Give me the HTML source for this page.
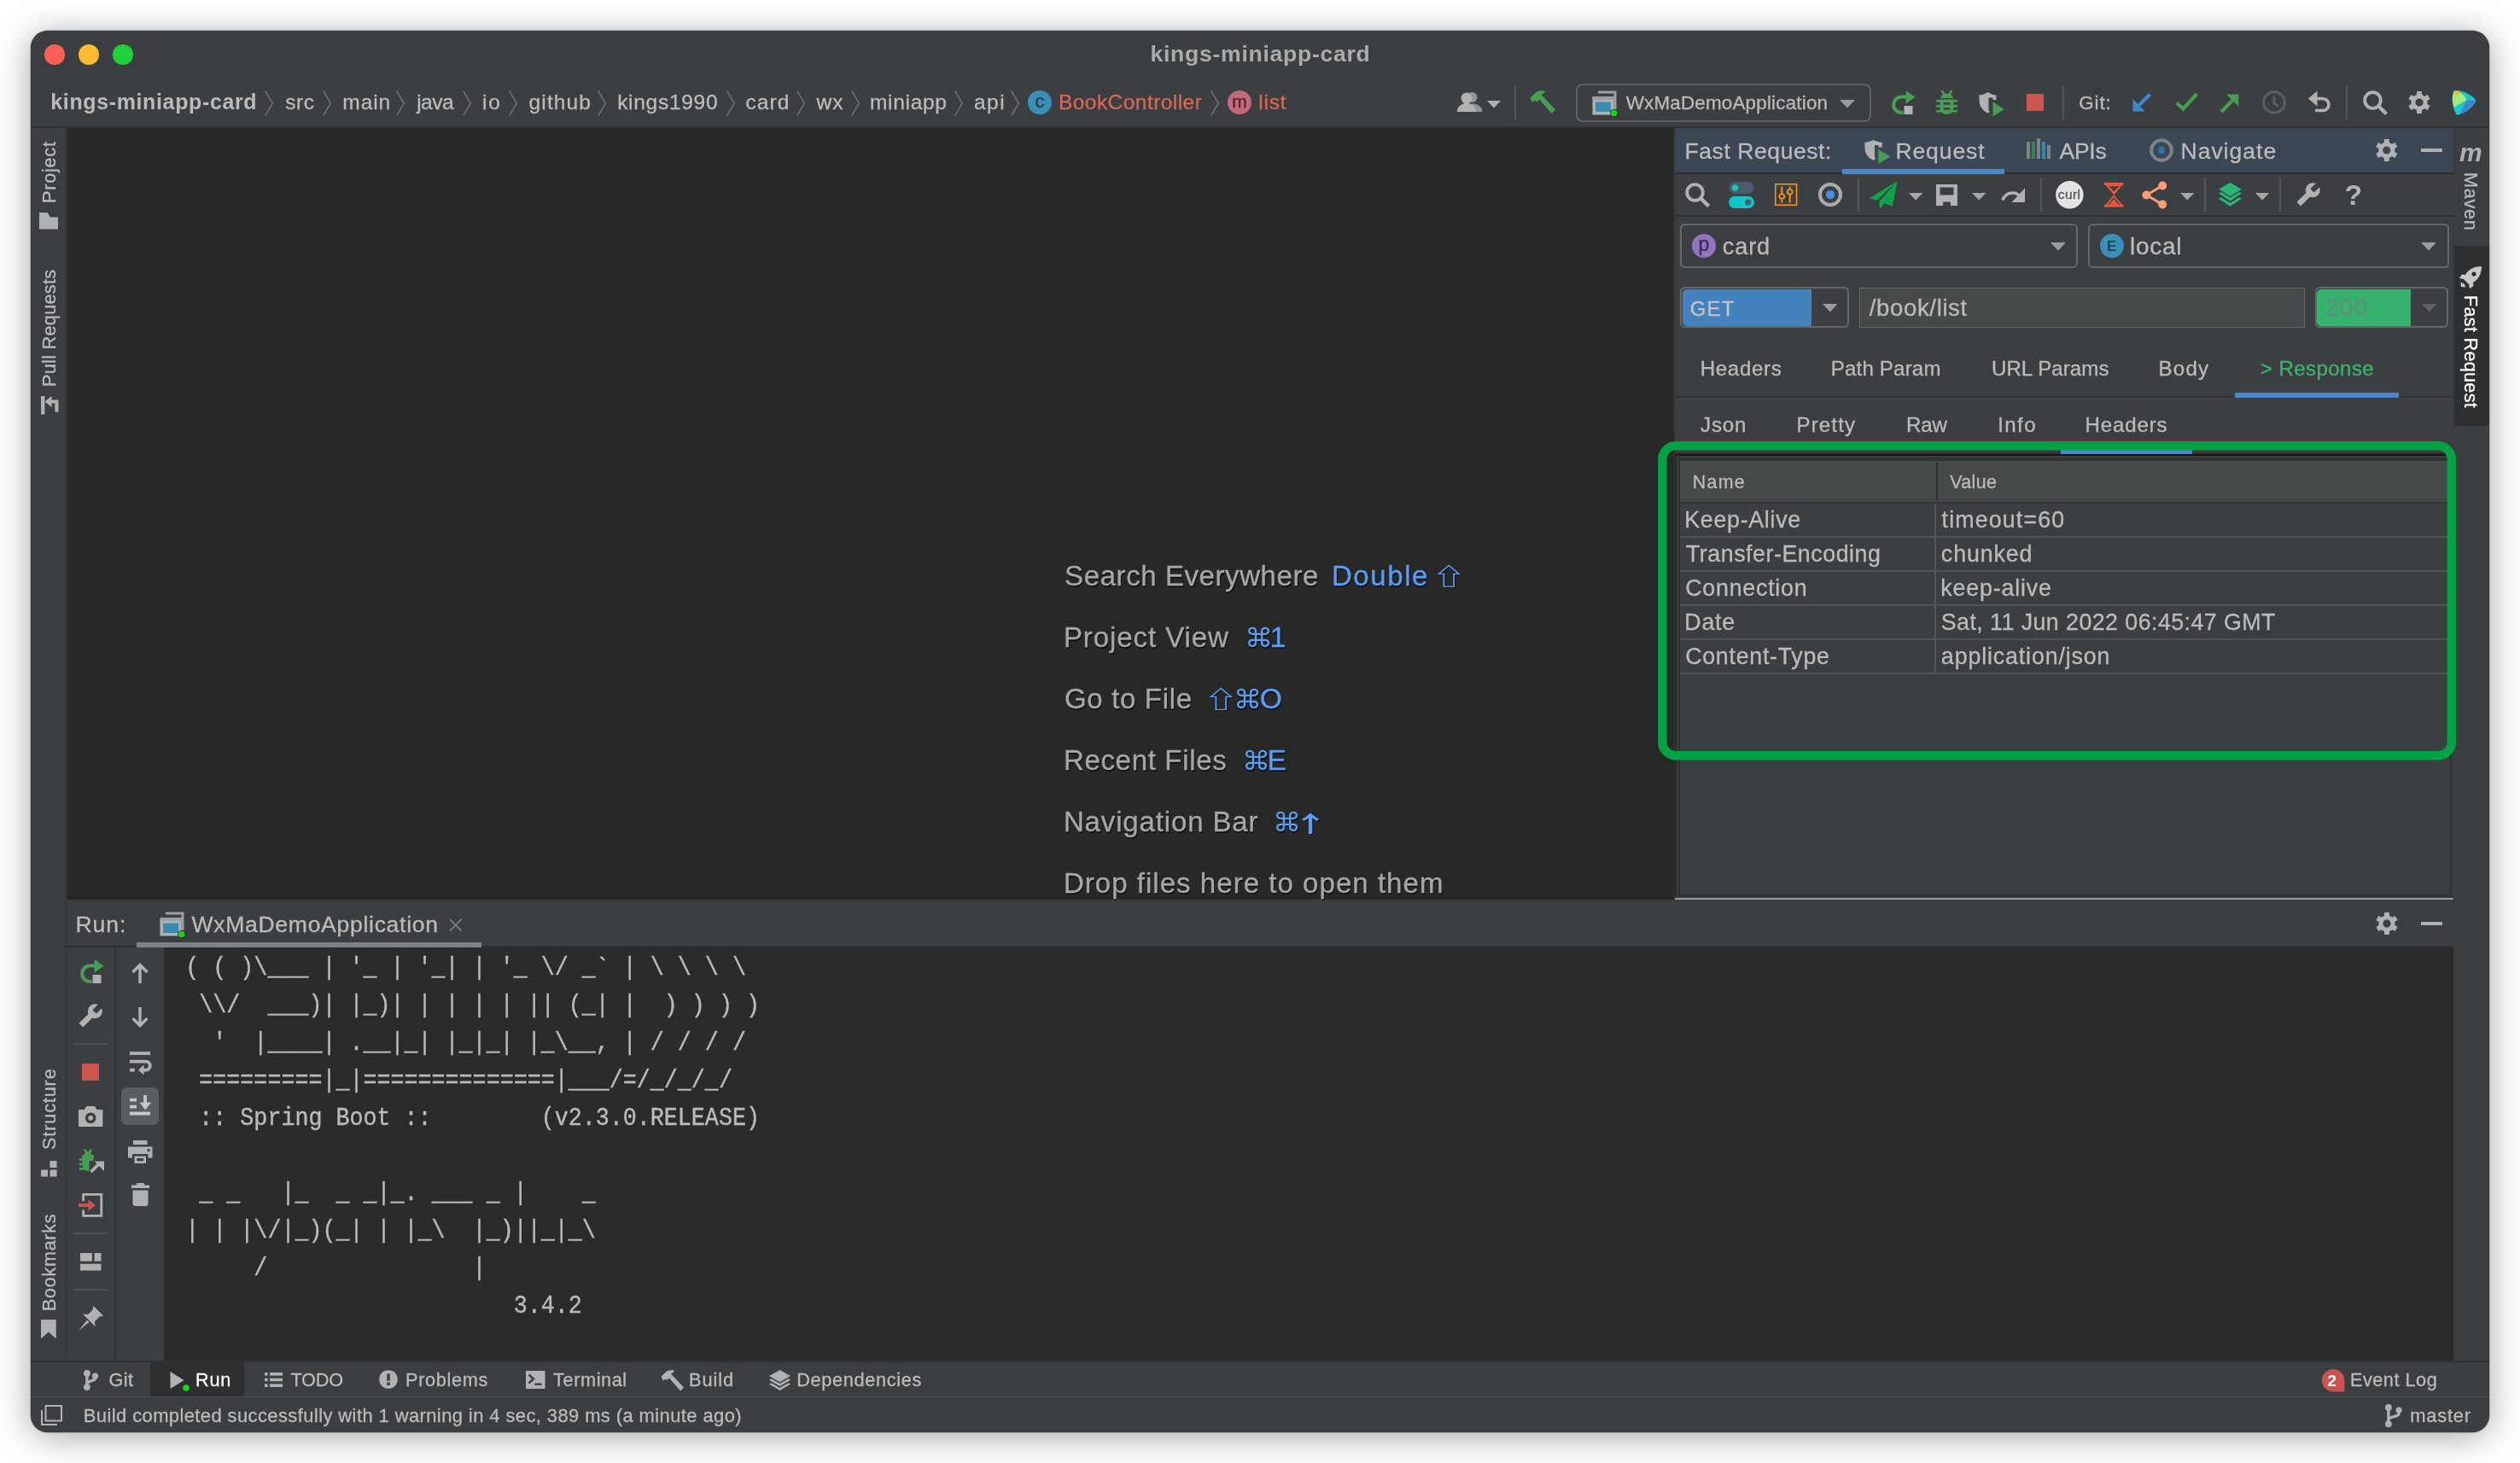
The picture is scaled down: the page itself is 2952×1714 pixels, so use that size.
<!DOCTYPE html>
<html><head><meta charset="utf-8"><title>kings-miniapp-card</title>
<style>
html,body{margin:0;padding:0;background:#fff;}
body{width:2952px;height:1714px;overflow:hidden;position:relative;font-family:'Liberation Sans','DejaVu Sans',sans-serif;}
#win{position:absolute;left:36px;top:36px;width:2880px;height:1642px;border-radius:20px;background:#3c3f41;overflow:hidden;}
#shadow{position:absolute;left:36px;top:36px;width:2880px;height:1642px;border-radius:20px;box-shadow:0 0 0 1px rgba(0,0,0,.22),0 5px 42px rgba(0,0,0,.36);}
#in{position:absolute;left:-36px;top:-36px;width:2952px;height:1714px;will-change:transform;}
svg{overflow:visible}
</style></head><body>
<div id="shadow"></div>
<div id="win"><div id="in">
<div style="position:absolute;left:36px;top:36px;width:2880px;height:1642px;background:#3c3f41;"></div>
<div style="position:absolute;left:36px;top:148px;width:2880px;height:2px;background:#323232;"></div>
<div style="position:absolute;left:78px;top:150px;width:1883px;height:904px;background:#282828;"></div>
<div style="position:absolute;left:76px;top:150px;width:2px;height:1445px;background:#35383a;"></div>
<div style="position:absolute;left:1961px;top:150px;width:914px;height:904px;background:#3c3f41;"></div>
<div style="position:absolute;left:1960px;top:150px;width:2px;height:904px;background:#313131;"></div>
<div style="position:absolute;left:2874px;top:150px;width:42px;height:1445px;background:#3c3f41;"></div>
<div style="position:absolute;left:2874px;top:150px;width:1px;height:1445px;background:#35383a;"></div>
<div style="position:absolute;left:2875px;top:288px;width:41px;height:211px;background:#2d2f30;"></div>
<div style="position:absolute;left:1962px;top:150px;width:912px;height:52px;background:#3b4754;"></div>
<div style="position:absolute;left:2158px;top:198px;width:190px;height:5.8px;background:#4a88c7;"></div>
<div style="position:absolute;left:1962px;top:252px;width:912px;height:2px;background:#323232;"></div>
<div style="position:absolute;left:1962px;top:1051.8px;width:912px;height:2.2px;background:#9c9d9e;"></div>
<div style="position:absolute;left:78px;top:1054px;width:2796px;height:55px;background:#3c3f41;"></div>
<div style="position:absolute;left:78px;top:1110px;width:2796px;height:485px;background:#2b2b2b;"></div>
<div style="position:absolute;left:78px;top:1110px;width:57px;height:485px;background:#3c3f41;"></div>
<div style="position:absolute;left:134px;top:1110px;width:2px;height:485px;background:#323232;"></div>
<div style="position:absolute;left:136px;top:1110px;width:56px;height:485px;background:#3c3f41;"></div>
<div style="position:absolute;left:78px;top:1108px;width:2796px;height:2px;background:#303030;"></div>
<div style="position:absolute;left:160px;top:1104px;width:404px;height:6px;background:#7d8287;"></div>
<div style="position:absolute;left:36px;top:1594px;width:2880px;height:2px;background:#323232;"></div>
<div style="position:absolute;left:36px;top:1596px;width:2880px;height:40px;background:#3c3f41;"></div>
<div style="position:absolute;left:176px;top:1596px;width:110px;height:40px;background:#2d2f30;"></div>
<div style="position:absolute;left:36px;top:1636px;width:2880px;height:1px;background:#4b4e50;"></div>
<div style="position:absolute;left:36px;top:1637px;width:2880px;height:41px;background:#3c3f41;"></div>
<svg style="position:absolute;left:310px;top:106px;" width="10" height="30" viewBox="0 0 10 30"><path d="M0.7 0.5 L9.3 15 L0.7 29.5" fill="none" stroke="#6b6e70" stroke-width="1.6"/></svg>
<svg style="position:absolute;left:378px;top:106px;" width="10" height="30" viewBox="0 0 10 30"><path d="M0.7 0.5 L9.3 15 L0.7 29.5" fill="none" stroke="#6b6e70" stroke-width="1.6"/></svg>
<svg style="position:absolute;left:464px;top:106px;" width="10" height="30" viewBox="0 0 10 30"><path d="M0.7 0.5 L9.3 15 L0.7 29.5" fill="none" stroke="#6b6e70" stroke-width="1.6"/></svg>
<svg style="position:absolute;left:542px;top:106px;" width="10" height="30" viewBox="0 0 10 30"><path d="M0.7 0.5 L9.3 15 L0.7 29.5" fill="none" stroke="#6b6e70" stroke-width="1.6"/></svg>
<svg style="position:absolute;left:596px;top:106px;" width="10" height="30" viewBox="0 0 10 30"><path d="M0.7 0.5 L9.3 15 L0.7 29.5" fill="none" stroke="#6b6e70" stroke-width="1.6"/></svg>
<svg style="position:absolute;left:700px;top:106px;" width="10" height="30" viewBox="0 0 10 30"><path d="M0.7 0.5 L9.3 15 L0.7 29.5" fill="none" stroke="#6b6e70" stroke-width="1.6"/></svg>
<svg style="position:absolute;left:851px;top:106px;" width="10" height="30" viewBox="0 0 10 30"><path d="M0.7 0.5 L9.3 15 L0.7 29.5" fill="none" stroke="#6b6e70" stroke-width="1.6"/></svg>
<svg style="position:absolute;left:932.7px;top:106px;" width="10" height="30" viewBox="0 0 10 30"><path d="M0.7 0.5 L9.3 15 L0.7 29.5" fill="none" stroke="#6b6e70" stroke-width="1.6"/></svg>
<svg style="position:absolute;left:996.8px;top:106px;" width="10" height="30" viewBox="0 0 10 30"><path d="M0.7 0.5 L9.3 15 L0.7 29.5" fill="none" stroke="#6b6e70" stroke-width="1.6"/></svg>
<svg style="position:absolute;left:1118px;top:106px;" width="10" height="30" viewBox="0 0 10 30"><path d="M0.7 0.5 L9.3 15 L0.7 29.5" fill="none" stroke="#6b6e70" stroke-width="1.6"/></svg>
<svg style="position:absolute;left:1184px;top:106px;" width="10" height="30" viewBox="0 0 10 30"><path d="M0.7 0.5 L9.3 15 L0.7 29.5" fill="none" stroke="#6b6e70" stroke-width="1.6"/></svg>
<svg style="position:absolute;left:1418px;top:106px;" width="10" height="30" viewBox="0 0 10 30"><path d="M0.7 0.5 L9.3 15 L0.7 29.5" fill="none" stroke="#6b6e70" stroke-width="1.6"/></svg>
<div style="position:absolute;left:1968.0px;top:262.0px;width:462px;height:47.5px;border:2px solid #656868;border-radius:5.5px;background:#3c3f41;box-sizing:content-box"></div>
<div style="position:absolute;left:2445.5px;top:262.0px;width:419.5px;height:47.5px;border:2px solid #656868;border-radius:5.5px;background:#3c3f41;box-sizing:content-box"></div>
<svg style="position:absolute;left:2401.7px;top:284.4px;" width="18" height="9.5" viewBox="0 0 18 9.5"><path d="M0 0 H18 L9.0 9.5 Z" fill="#9a9da0"/></svg>
<svg style="position:absolute;left:2835.8px;top:284.4px;" width="18" height="9.5" viewBox="0 0 18 9.5"><path d="M0 0 H18 L9.0 9.5 Z" fill="#9a9da0"/></svg>
<div style="position:absolute;left:1968.2px;top:336.2px;width:193.7px;height:43.8px;border:2px solid #656868;border-radius:5.5px;background:#3c3f41;box-sizing:content-box"></div>
<div style="position:absolute;left:1970.5px;top:338.5px;width:151.2px;height:43.4px;background:#4382bd;border-radius:5px 0 0 5px"></div>
<svg style="position:absolute;left:2134.7px;top:355.5px;" width="17.5" height="9.5" viewBox="0 0 17.5 9.5"><path d="M0 0 H17.5 L8.75 9.5 Z" fill="#9a9da0"/></svg>
<div style="position:absolute;left:2178.3px;top:337px;width:520px;height:45px;border:1.5px solid #646668;background:#45494a"></div>
<div style="position:absolute;left:2711.9px;top:336.2px;width:152.6px;height:43.8px;border:2px solid #656868;border-radius:5.5px;background:#3c3f41;box-sizing:content-box"></div>
<div style="position:absolute;left:2714.2px;top:338.5px;width:110px;height:43.4px;background:#35b36e;border-radius:5px 0 0 5px"></div>
<svg style="position:absolute;left:2836.5px;top:355.5px;" width="17.5" height="9.5" viewBox="0 0 17.5 9.5"><path d="M0 0 H17.5 L8.75 9.5 Z" fill="#5f6365"/></svg>
<div style="position:absolute;left:1962px;top:463.5px;width:912px;height:2px;background:#323232;"></div>
<div style="position:absolute;left:2618px;top:460px;width:192px;height:6px;background:#4a88c7;"></div>
<div style="position:absolute;left:1962px;top:528px;width:912px;height:2px;background:#3b3a3d;"></div>
<div style="position:absolute;left:1962px;top:530px;width:912px;height:2px;background:#323232;"></div>
<div style="position:absolute;left:2413.7px;top:527px;width:154.3px;height:5px;background:#4a88c7;"></div>
<div style="position:absolute;left:1962px;top:532px;width:912px;height:2px;background:#151515;"></div>
<div style="position:absolute;left:1962px;top:533px;width:2px;height:517px;background:#282828;"></div>
<div style="position:absolute;left:1966px;top:536px;width:906px;height:4px;background:#323232;"></div>
<div style="position:absolute;left:1966px;top:533px;width:2px;height:517px;background:#303030;"></div>
<div style="position:absolute;left:2870px;top:533px;width:2px;height:517px;background:#303030;"></div>
<div style="position:absolute;left:1966px;top:1048px;width:906px;height:2.5px;background:#303030;"></div>
<div style="position:absolute;left:1968px;top:540px;width:2900px;height:0px;background:#000;"></div>
<div style="position:absolute;left:1968px;top:540px;width:900px;height:48px;background:#45494a;"></div>
<div style="position:absolute;left:1968px;top:588px;width:900px;height:2px;background:#2f383b;"></div>
<div style="position:absolute;left:2268px;top:542px;width:2px;height:44px;background:#2b3538;"></div>
<div style="position:absolute;left:1968px;top:628px;width:900px;height:2px;background:#525557;"></div>
<div style="position:absolute;left:1968px;top:668px;width:900px;height:2px;background:#525557;"></div>
<div style="position:absolute;left:1968px;top:708px;width:900px;height:2px;background:#525557;"></div>
<div style="position:absolute;left:1968px;top:748px;width:900px;height:2px;background:#525557;"></div>
<div style="position:absolute;left:1968px;top:788px;width:900px;height:2px;background:#525557;"></div>
<div style="position:absolute;left:2266px;top:590px;width:2px;height:200px;background:#525557;"></div>
<svg style="position:absolute;left:52px;top:52px;" width="24" height="24" viewBox="0 0 24 24"><circle cx="12" cy="12" r="12" fill="#fe5f57"/></svg>
<svg style="position:absolute;left:92px;top:52px;" width="24" height="24" viewBox="0 0 24 24"><circle cx="12" cy="12" r="12" fill="#febc2e"/></svg>
<svg style="position:absolute;left:132px;top:52px;" width="24" height="24" viewBox="0 0 24 24"><circle cx="12" cy="12" r="12" fill="#1fd038"/></svg>
<svg style="position:absolute;left:1204px;top:106px;" width="28" height="28" viewBox="0 0 28 28"><circle cx="14" cy="14" r="14" fill="#3a8fb7"/></svg>
<svg style="position:absolute;left:1438px;top:106px;" width="28" height="28" viewBox="0 0 28 28"><circle cx="14" cy="14" r="14" fill="#c1687b"/></svg>
<svg style="position:absolute;left:1707px;top:107px;" width="30" height="24" viewBox="0 0 30 24"><g fill="#afb1b3"><circle cx="17.5" cy="7" r="6" opacity=".75"/><path d="M9 24 C9 17 13 14.5 17.500 14.5 C23 14.5 29.500 17 29.500 24 Z" opacity=".75"/><circle cx="11" cy="8" r="6.500"/><path d="M0 24 C0 17 5 15.500 7.500 14.500 L8.500 12 H13.500 L14.500 14.500 C17 15.500 22 17 22 24 Z"/></g></svg>
<svg style="position:absolute;left:1742px;top:118px;" width="16" height="8.5" viewBox="0 0 16 8.5"><path d="M0 0 H16 L8.0 8.5 Z" fill="#afb1b3"/></svg>
<div style="position:absolute;left:1773.8px;top:100px;width:2px;height:40px;background:#555759;"></div>
<svg style="position:absolute;left:1792px;top:106px;" width="30" height="28" viewBox="0 0 30 28"><g fill="#499c54"><path d="M0.500 8.500 L9 0.800 L16.500 0 L18 1.800 L13.500 5.500 L15 7.500 L8 13.500 L6.500 11.800 L3 14 Z"/><path d="M10.500 9.500 L14.500 6 L30 22.500 L25.500 27 Z"/></g></svg>
<div style="position:absolute;left:1845.5px;top:98px;width:342px;height:40.5px;border:2px solid #5f6265;border-radius:8px"></div>
<svg style="position:absolute;left:1865px;top:105.5px;" width="30" height="30" viewBox="0 0 30 30"><g><path d="M7 0.500 H28.500 V22 H25.500 V3.500 H7 Z" fill="#9da0a3"/><rect x="0.500" y="7" width="25" height="21.500" fill="#afb1b3"/><rect x="0.500" y="7" width="25" height="4" fill="#9da0a3"/><rect x="4" y="13.500" width="18" height="11.500" fill="#3a8cb1"/><circle cx="25.800" cy="26.500" r="4.600" fill="#2b2b2b"/><circle cx="25.800" cy="26.500" r="3.800" fill="#12d812"/></g></svg>
<svg style="position:absolute;left:2155px;top:117px;" width="18" height="9.5" viewBox="0 0 18 9.5"><path d="M0 0 H18 L9.0 9.5 Z" fill="#9a9da0"/></svg>
<svg style="position:absolute;left:2215.5px;top:106px;" width="28" height="29" viewBox="0 0 28 29"><g><path d="M17 7.600 H11.350 A9.150 9.150 0 1 0 11.350 25.900 H13.500" fill="none" stroke="#499c54" stroke-width="4"/><path d="M16.600 0.100 L27.500 7.750 L16.600 15.400 Z" fill="#499c54"/><rect x="14.500" y="18" width="10" height="10" fill="#afb1b3"/></g></svg>
<svg style="position:absolute;left:2267.7px;top:106px;" width="25" height="28" viewBox="0 0 25 28"><g fill="#499c54"><path d="M5.500 0.500 L7.800 -0.500 L10.500 3.800 H14.500 L17.200 -0.500 L19.500 0.500 L17 5 C19 6 20 7.500 20 9 H5 C5 7.500 6 6 8 5 Z"/><path d="M4.500 10.500 H20.500 V20 C20.500 25 17 28 12.500 28 C8 28 4.500 25 4.500 20 Z"/><rect x="0" y="11" width="25" height="2.600"/><rect x="0" y="17" width="25" height="2.600"/><rect x="0" y="23" width="25" height="2.600"/></g><rect x="8.500" y="14.200" width="8" height="2.400" fill="#3c3f41"/><rect x="8.500" y="20.200" width="8" height="2.400" fill="#3c3f41"/></svg>
<svg style="position:absolute;left:2317.7px;top:107.5px;" width="30" height="29" viewBox="0 0 30 29"><g><path d="M0.500 3.500 C5 3 8 1.500 10.500 0 C13 1.500 16 3 20.500 3.500 V9 H16.500 V6.500 H11.500 V21.500 L13 22.500 C12 23.500 11.500 24 10.500 24.500 C4 21.500 0.500 16 0.500 9 Z" fill="#afb1b3"/><path d="M16.500 11.500 L30 20 L16.500 28.500 Z" fill="#499c54"/></g></svg>
<div style="position:absolute;left:2374px;top:110px;width:20px;height:20px;background:#c9554d;"></div>
<div style="position:absolute;left:2415.9px;top:100px;width:2px;height:40px;background:#555759;"></div>
<svg style="position:absolute;left:2497.5px;top:107.5px;" width="23" height="23" viewBox="0 0 23 23"><g><path d="M20.500 2.500 L6 17" stroke="#3f88d1" stroke-width="4" fill="none"/><path d="M0.500 8 L0.500 22.500 L15 22.500 Z" fill="#3f88d1"/></g></svg>
<svg style="position:absolute;left:2548px;top:108px;" width="27" height="22" viewBox="0 0 27 22"><path d="M1.800 12.500 L9.500 19.500 L25.500 2" fill="none" stroke="#499c54" stroke-width="4.200"/></svg>
<svg style="position:absolute;left:2600px;top:109.5px;" width="23" height="23" viewBox="0 0 23 23"><g><path d="M2 21 L17 6" stroke="#499c54" stroke-width="4" fill="none"/><path d="M8 0.500 H22.500 V15 Z" fill="#499c54"/></g></svg>
<svg style="position:absolute;left:2650px;top:105.8px;" width="28" height="28" viewBox="0 0 28 28"><g fill="none" stroke="#5b5e60" stroke-width="3.200"><circle cx="14" cy="14" r="12.300"/><path d="M13.800 7 V15 L19 18.500" stroke-width="2.800"/></g></svg>
<svg style="position:absolute;left:2704px;top:106px;" width="27" height="27" viewBox="0 0 27 27"><g><path d="M8 9.500 H17 A7 7 0 0 1 17 23.500 H8" fill="none" stroke="#afb1b3" stroke-width="3.600"/><path d="M0 9.500 L10.500 0.500 V18.500 Z" fill="#afb1b3"/></g></svg>
<div style="position:absolute;left:2748px;top:100px;width:2px;height:40px;background:#555759;"></div>
<svg style="position:absolute;left:2767.5px;top:105.8px;" width="29" height="29" viewBox="0 0 29 29"><g fill="none" stroke="#afb1b3"><circle cx="11.500" cy="11.500" r="9.300" stroke-width="3.800"/><path d="M18.200 18.200 L27.500 27.500" stroke-width="4.400"/></g></svg>
<svg style="position:absolute;left:0px;top:0px;" width="1" height="1" viewBox="0 0 1 1"><path d="M2830.94 110.90 L2831.12 107.12 L2836.88 107.12 L2837.06 110.90 L2840.35 112.80 L2843.72 111.07 L2846.60 116.05 L2843.41 118.10 L2843.41 121.90 L2846.60 123.95 L2843.72 128.93 L2840.35 127.20 L2837.06 129.10 L2836.88 132.88 L2831.12 132.88 L2830.94 129.10 L2827.65 127.20 L2824.28 128.93 L2821.40 123.95 L2824.59 121.90 L2824.59 118.10 L2821.40 116.05 L2824.28 111.07 L2827.65 112.80 Z M2829.40 120.00 a4.6 4.6 0 1 0 9.2 0 a4.6 4.6 0 1 0 -9.2 0 Z" fill="#afb1b3" fill-rule="evenodd"/></svg>
<svg style="position:absolute;left:2871.5px;top:105.8px;" width="29" height="28.5" viewBox="0 0 29 28.5"><g><path d="M3 0 C12 -1 24 5 28.700 12 C25 21 14 28 6 28.400 C1 21 -1 9 3 0 Z" fill="#3f86c9"/><path d="M3 0 C12 -1 24 5 28.700 12 L17.500 11.500 L9.600 28 C8 28.300 7 28.400 6 28.400 C1 21 -1 9 3 0 Z" fill="#1cc5cf"/><path d="M7 0.200 C10 0.300 13 1.200 15.500 3 L10 4 Z" fill="#2cb978"/><path d="M3 0.300 C8 0.300 13.500 3 17.500 11 L3.300 19.800 C0 14 0 6 3 0.300 Z" fill="#a5e87f"/><path d="M3.200 0.400 C6 0.200 8.500 1.300 10 3.500 L4.200 5.500 C3.500 4 3 2 3.200 0.400 Z" fill="#fbb02d"/></g></svg>
<svg style="position:absolute;left:2183.5px;top:163.5px;" width="31" height="29" viewBox="0 0 31 29"><g><path d="M0.500 3 C4.500 2.600 7.500 1.300 10.500 0 C13.500 1.300 16.500 2.600 20.800 3 V8.500 H16.500 V6 H12 V20.500 L13.500 21.500 C12.500 22.500 11.500 23.300 10.500 23.800 C4 20.800 0.500 15.500 0.500 8.500 Z" fill="#afb1b3"/><path d="M16.300 11 L30.500 19.500 L16.300 28 Z" fill="#499c54"/></g></svg>
<div style="position:absolute;left:2374.4px;top:166px;width:4px;height:19.80000000000001px;background:#7f8386;"></div>
<div style="position:absolute;left:2380px;top:166px;width:4px;height:19.80000000000001px;background:#3e7f57;"></div>
<div style="position:absolute;left:2386.1px;top:162px;width:4px;height:23.80000000000001px;background:#7f8386;"></div>
<div style="position:absolute;left:2392.2px;top:166px;width:4px;height:19.80000000000001px;background:#3786ad;"></div>
<div style="position:absolute;left:2397.8px;top:169.8px;width:4px;height:16.0px;background:#7f8386;"></div>
<svg style="position:absolute;left:2518px;top:162px;" width="28" height="28" viewBox="0 0 28 28"><circle cx="14" cy="14" r="11.800" fill="none" stroke="#7c8288" stroke-width="4"/><circle cx="14" cy="14" r="4.300" fill="#2a76aa"/></svg>
<svg style="position:absolute;left:0px;top:0px;" width="1" height="1" viewBox="0 0 1 1"><path d="M2792.74 166.90 L2792.92 163.12 L2798.68 163.12 L2798.86 166.90 L2802.15 168.80 L2805.52 167.07 L2808.40 172.05 L2805.21 174.10 L2805.21 177.90 L2808.40 179.95 L2805.52 184.93 L2802.15 183.20 L2798.86 185.10 L2798.68 188.88 L2792.92 188.88 L2792.74 185.10 L2789.45 183.20 L2786.08 184.93 L2783.20 179.95 L2786.39 177.90 L2786.39 174.10 L2783.20 172.05 L2786.08 167.07 L2789.45 168.80 Z M2791.20 176.00 a4.6 4.6 0 1 0 9.2 0 a4.6 4.6 0 1 0 -9.2 0 Z" fill="#afb1b3" fill-rule="evenodd"/></svg>
<div style="position:absolute;left:2836px;top:174px;width:24.5px;height:4px;background:#afb1b3;"></div>
<div style="position:absolute;left:1962px;top:201.5px;width:196px;height:2px;background:#2d3033;"></div>
<div style="position:absolute;left:2348px;top:201.5px;width:526px;height:2px;background:#2d3033;"></div>
<svg style="position:absolute;left:1973.8px;top:213.8px;" width="29" height="29" viewBox="0 0 29 29"><g fill="none" stroke="#afb1b3"><circle cx="11.500" cy="11.500" r="9.300" stroke-width="3.800"/><path d="M18.200 18.200 L27.500 27.500" stroke-width="4.400"/></g></svg>
<svg style="position:absolute;left:2025.2px;top:212.6px;" width="30" height="31" viewBox="0 0 30 31"><g><rect x="0.500" y="0" width="29" height="14" rx="7" fill="#4e5a6c"/><circle cx="7.500" cy="7" r="3.700" fill="#10c9c9"/><rect x="0" y="16.800" width="30" height="14.200" rx="7.100" fill="#0cc7c7"/><circle cx="22.800" cy="24" r="3.600" fill="#50586a"/></g></svg>
<svg style="position:absolute;left:2079px;top:214.9px;" width="26.5" height="26" viewBox="0 0 26.5 26"><g fill="none" stroke="#f3921c"><rect x="0.800" y="0.800" width="24.800" height="24.400" stroke-width="1.600"/><path d="M8.300 3.500 V11.500 M8.300 18.500 V22.500 M17.700 3.500 V6.500 M17.700 13 V22.500" stroke-width="2"/><circle cx="8.300" cy="15" r="2.900" stroke-width="1.800"/><circle cx="17.700" cy="9.700" r="2.900" stroke-width="1.800"/></g></svg>
<svg style="position:absolute;left:2130px;top:213.8px;" width="28" height="28" viewBox="0 0 28 28"><circle cx="14" cy="14" r="12" fill="none" stroke="#a9abad" stroke-width="4"/><circle cx="14" cy="14" r="5.200" fill="#4a8fd8"/></svg>
<div style="position:absolute;left:2175.8px;top:208px;width:2px;height:39.5px;background:#555759;"></div>
<svg style="position:absolute;left:2189.9px;top:211.7px;" width="33" height="33" viewBox="0 0 33 33"><g fill="#10a248"><path d="M32.500 0 L0 20 L8.500 23 Z"/><path d="M32.500 0 L11 24.500 L12.500 33 L17 26 Z" /><path d="M32.500 0 L13.500 25 L27 29.500 Z"/></g></svg>
<svg style="position:absolute;left:2235.8px;top:225.7px;" width="16.5" height="8.5" viewBox="0 0 16.5 8.5"><path d="M0 0 H16.5 L8.25 8.5 Z" fill="#a5a7a9"/></svg>
<svg style="position:absolute;left:2267.6px;top:215.6px;" width="25" height="25" viewBox="0 0 25 25"><path d="M0 0 H25 V25 H0 Z M4.500 3.500 V12.500 H20.500 V3.500 Z M8.200 20.500 V25 H16.900 V20.500 Z" fill="#afb1b3" fill-rule="evenodd"/></svg>
<svg style="position:absolute;left:2309.8px;top:225.7px;" width="16.5" height="8.5" viewBox="0 0 16.5 8.5"><path d="M0 0 H16.5 L8.25 8.5 Z" fill="#a5a7a9"/></svg>
<svg style="position:absolute;left:2344.4px;top:219.5px;" width="28" height="18" viewBox="0 0 28 18"><g><path d="M1.800 14.500 C4.500 8.500 9 6 13.500 6 C17.500 6 20.500 7.800 22.500 10.500" fill="none" stroke="#afb1b3" stroke-width="3.400"/><path d="M28 0.500 V17 H12.500 Z" fill="#afb1b3"/></g></svg>
<div style="position:absolute;left:2390.2px;top:208px;width:2px;height:39.5px;background:#555759;"></div>
<svg style="position:absolute;left:2407.5px;top:211.7px;" width="33" height="33" viewBox="0 0 33 33"><circle cx="16.400" cy="16.200" r="16.200" fill="#e2e2e2"/></svg>
<svg style="position:absolute;left:2464.7px;top:213.8px;" width="23" height="29" viewBox="0 0 23 29"><g fill="#f4553f"><rect x="0" y="0" width="22.600" height="2.800"/><rect x="0" y="25.700" width="22.600" height="2.800"/><path d="M1 2 L11.300 14.200 L21.600 2 L19.500 2 L11.300 11.500 L3.100 2 Z"/><path d="M2 2.800 H20.600 L11.300 14 Z" opacity=".95"/><path d="M11.300 14.200 L1 26.500 H3.300 L11.300 17 L19.300 26.500 H21.600 Z"/><path d="M11.300 19.500 L17 25.700 H5.600 Z"/></g><path d="M5.500 4.200 H17.100 L11.300 10.500 Z" fill="#3c3f41"/></svg>
<svg style="position:absolute;left:2509px;top:211.7px;" width="30" height="33" viewBox="0 0 30 33"><g fill="#ff9c78" stroke="#ff9c78"><path d="M24 5.500 L5.500 16.500 L24 27.500" fill="none" stroke-width="2.800"/><circle cx="24.200" cy="5.500" r="5" stroke="none"/><circle cx="5.500" cy="16.500" r="5" stroke="none"/><circle cx="24.200" cy="27.500" r="5" stroke="none"/></g></svg>
<svg style="position:absolute;left:2553.8px;top:225.7px;" width="16.5" height="8.5" viewBox="0 0 16.5 8.5"><path d="M0 0 H16.5 L8.25 8.5 Z" fill="#a5a7a9"/></svg>
<div style="position:absolute;left:2581.8px;top:208px;width:2px;height:39.5px;background:#555759;"></div>
<svg style="position:absolute;left:2598.7px;top:213.8px;" width="27" height="28" viewBox="0 0 27 28"><g fill="#2cb673"><path d="M13.500 0 L27 7.800 L13.500 16 L0 7.800 Z"/><path d="M0 12.600 L2.800 11 L13.500 17.500 L24.200 11 L27 12.600 L13.500 21.500 Z"/><path d="M0 18.800 L2.800 17.200 L13.500 23.800 L24.200 17.200 L27 18.800 L13.500 27.800 Z"/></g></svg>
<svg style="position:absolute;left:2641.8px;top:225.7px;" width="16.5" height="8.5" viewBox="0 0 16.5 8.5"><path d="M0 0 H16.5 L8.25 8.5 Z" fill="#a5a7a9"/></svg>
<div style="position:absolute;left:2669.8px;top:208px;width:2px;height:39.5px;background:#555759;"></div>
<svg style="position:absolute;left:2690.3px;top:214.2px;" width="28.0" height="28.0" viewBox="0 0 28 28"><g><path d="M2.800 25.200 L17 11" stroke="#afb1b3" stroke-width="6.600" fill="none"/><circle cx="19.300" cy="8.700" r="8.500" fill="#afb1b3"/><rect x="18.300" y="5.600" width="12" height="6.200" fill="#3c3f41" transform="rotate(-45 19.300 8.700)"/></g></svg>
<svg style="position:absolute;left:1982px;top:274.4px;" width="28" height="28" viewBox="0 0 28 28"><circle cx="14" cy="14" r="14" fill="#9274c0"/></svg>
<svg style="position:absolute;left:2459.6px;top:274.4px;" width="28" height="28" viewBox="0 0 28 28"><circle cx="14" cy="14" r="14" fill="#3a8fb7"/></svg>
<svg style="position:absolute;left:46px;top:249px;" width="22" height="19.5" viewBox="0 0 22 19.5"><path d="M0 0 H9.500 L13 5.500 H22 V19.500 H0 Z" fill="#afb1b3"/></svg>
<svg style="position:absolute;left:47.5px;top:464px;" width="20.5" height="21.5" viewBox="0 0 20.5 21.5"><g fill="#afb1b3"><rect x="0" y="0" width="4.400" height="21.500"/><path d="M4.400 6.500 L12.500 0 V4.400 H20.500 V18.500 H16.300 V8.600 H12.500 V13 Z"/></g></svg>
<svg style="position:absolute;left:48px;top:1360px;" width="18.5" height="18.5" viewBox="0 0 18.5 18.5"><g fill="#afb1b3"><rect x="10.500" y="0" width="8" height="8"/><rect x="0" y="10.500" width="8" height="8"/><rect x="10.500" y="10.500" width="8" height="8"/></g></svg>
<svg style="position:absolute;left:48px;top:1545.7px;" width="17.7" height="22.5" viewBox="0 0 17.7 22.5"><path d="M0 0 H17.700 V22.500 L8.850 14.500 L0 22.500 Z" fill="#afb1b3"/></svg>
<svg style="position:absolute;left:2881px;top:311.5px;" width="26" height="26" viewBox="0 0 26 26"><g fill="#c8c9ca"><path d="M26 0 C18 0 11 3 7 10 L3 9.500 L0 14 L5 15 L11 21 L12 26 L16.500 23 L16 19 C23 15 26 8 26 0 Z"/><path d="M1.500 18.500 L5.500 20.500 L7.500 24.500 L2 24 Z"/></g><circle cx="17" cy="9" r="2.600" fill="#2d2f30"/></svg>
<svg style="position:absolute;left:186.5px;top:1067.5px;" width="30" height="30" viewBox="0 0 30 30"><g><path d="M7 0.500 H28.500 V22 H25.500 V3.500 H7 Z" fill="#9da0a3"/><rect x="0.500" y="7" width="25" height="21.500" fill="#afb1b3"/><rect x="0.500" y="7" width="25" height="4" fill="#9da0a3"/><rect x="4" y="13.500" width="18" height="11.500" fill="#3a8cb1"/><circle cx="25.800" cy="26.500" r="4.600" fill="#2b2b2b"/><circle cx="25.800" cy="26.500" r="3.800" fill="#12d812"/></g></svg>
<svg style="position:absolute;left:526.4px;top:1076.3px;" width="15.4" height="15.4" viewBox="0 0 15.4 15.4"><path d="M1 1 L14.400 14.400 M14.400 1 L1 14.400" stroke="#7a7d80" stroke-width="1.800" fill="none"/></svg>
<svg style="position:absolute;left:0px;top:0px;" width="1" height="1" viewBox="0 0 1 1"><path d="M2792.94 1072.90 L2793.12 1069.12 L2798.88 1069.12 L2799.06 1072.90 L2802.35 1074.80 L2805.72 1073.07 L2808.60 1078.05 L2805.41 1080.10 L2805.41 1083.90 L2808.60 1085.95 L2805.72 1090.93 L2802.35 1089.20 L2799.06 1091.10 L2798.88 1094.88 L2793.12 1094.88 L2792.94 1091.10 L2789.65 1089.20 L2786.28 1090.93 L2783.40 1085.95 L2786.59 1083.90 L2786.59 1080.10 L2783.40 1078.05 L2786.28 1073.07 L2789.65 1074.80 Z M2791.40 1082.00 a4.6 4.6 0 1 0 9.2 0 a4.6 4.6 0 1 0 -9.2 0 Z" fill="#afb1b3" fill-rule="evenodd"/></svg>
<div style="position:absolute;left:2836px;top:1080px;width:24.5px;height:4px;background:#afb1b3;"></div>
<svg style="position:absolute;left:93.6px;top:1124px;" width="28" height="29" viewBox="0 0 28 29"><g><path d="M17 7.600 H11.350 A9.150 9.150 0 1 0 11.350 25.900 H13.500" fill="none" stroke="#499c54" stroke-width="4"/><path d="M16.600 0.100 L27.500 7.750 L16.600 15.400 Z" fill="#499c54"/><rect x="14.500" y="18" width="10" height="10" fill="#afb1b3"/></g></svg>
<svg style="position:absolute;left:92.3px;top:1176.2px;" width="28.0" height="28.0" viewBox="0 0 28 28"><g><path d="M2.800 25.200 L17 11" stroke="#afb1b3" stroke-width="6.600" fill="none"/><circle cx="19.300" cy="8.700" r="8.500" fill="#afb1b3"/><rect x="18.300" y="5.600" width="12" height="6.200" fill="#3c3f41" transform="rotate(-45 19.300 8.700)"/></g></svg>
<div style="position:absolute;left:86px;top:1222px;width:40px;height:2px;background:#505355;"></div>
<div style="position:absolute;left:96px;top:1245.7px;width:20.4px;height:20.4px;background:#c9554d;"></div>
<svg style="position:absolute;left:91.8px;top:1295.7px;" width="28.4" height="24" viewBox="0 0 28.4 24"><path d="M9.500 0 H19 L21.500 4 H28.400 V24 H0 V4 H7 Z M14.200 7.500 a6.300 6.300 0 1 0 0.010 0 Z M14.200 10.800 a3 3 0 1 1 -0.010 0 Z" fill="#afb1b3" fill-rule="evenodd"/></svg>
<svg style="position:absolute;left:93px;top:1346px;" width="29" height="29" viewBox="0 0 29 29"><g fill="#499c54"><path d="M5 1 L7 0 L10 4 L13 0 L15 1 L13 5.500 L17 8 V10 H3 V8 L7 5.500 Z"/><rect x="0" y="11" width="14" height="2.800"/><rect x="0" y="16.500" width="11" height="2.800"/><rect x="0" y="22" width="11" height="2.800"/><path d="M3.500 10 H16.500 V13.800 H11.500 V26 C7 26 3.500 23 3.500 19 Z"/></g><g fill="#afb1b3"><path d="M17.500 14.500 H29 V26 Z"/><path d="M13.500 27 L24 16.500" stroke="#afb1b3" stroke-width="3.600" fill="none"/></g></svg>
<svg style="position:absolute;left:92px;top:1398px;" width="28.2" height="27.8" viewBox="0 0 28.2 27.8"><g><path d="M4.200 0 H28.200 V27.800 H4.200 V19.500 H7 V25 H25.400 V2.800 H7 V9 H4.200 Z" fill="#afb1b3"/><path d="M0 12 H11.500 V7.500 L20 14 L11.500 20.500 V16 H0 Z" fill="#c9554d"/></g></svg>
<div style="position:absolute;left:86px;top:1444px;width:40px;height:2px;background:#505355;"></div>
<svg style="position:absolute;left:93.9px;top:1467.7px;" width="24.5" height="20.5" viewBox="0 0 24.5 20.5"><g fill="#afb1b3"><rect x="0" y="0" width="13.800" height="9.600"/><rect x="16.600" y="0" width="7.800" height="9.600"/><rect x="0" y="12.700" width="24.400" height="7.800"/></g></svg>
<div style="position:absolute;left:86px;top:1509.7px;width:40px;height:2px;background:#505355;"></div>
<svg style="position:absolute;left:91.5px;top:1530px;" width="29" height="29" viewBox="0 0 29 29"><g fill="#afb1b3"><path d="M17.500 0 L29 11.500 L24.500 12.500 L19 18 L19.500 24 L5 9.500 L11 10 L16.500 4.500 Z"/><path d="M10 16.500 L12.500 19 L0 29 Z"/></g></svg>
<svg style="position:absolute;left:154px;top:1128px;" width="20" height="24" viewBox="0 0 20 24"><path d="M10 2.500 V24 M1.500 11 L10 2.500 L18.500 11" fill="none" stroke="#afb1b3" stroke-width="3.400"/></svg>
<svg style="position:absolute;left:154px;top:1180px;" width="20" height="24" viewBox="0 0 20 24"><path d="M10 0 V21.500 M1.500 13 L10 21.500 L18.500 13" fill="none" stroke="#afb1b3" stroke-width="3.400"/></svg>
<svg style="position:absolute;left:152px;top:1232px;" width="25" height="28" viewBox="0 0 25 28"><g fill="none" stroke="#afb1b3" stroke-width="3.800"><path d="M0 2 H24"/><path d="M0 11.600 H19 A4.800 5 0 0 1 19 21.600 H14"/><path d="M0 21.600 H5.800"/></g><path d="M10 21.600 L16.500 15.600 V27.600 Z" fill="#afb1b3"/></svg>
<div style="position:absolute;left:141.8px;top:1274px;width:44.2px;height:44px;background:#595d60;border-radius:6px"></div>
<svg style="position:absolute;left:152px;top:1282.5px;" width="25" height="26" viewBox="0 0 25 26"><g fill="none" stroke="#c6c8ca" stroke-width="3.800"><path d="M0 5.600 H8 M0 13.600 H8 M0 21.500 H24"/><path d="M18 0 V12"/></g><path d="M11.500 8.500 H25 L18.200 17.500 Z" fill="#c6c8ca"/></svg>
<svg style="position:absolute;left:150px;top:1335.7px;" width="28.5" height="27" viewBox="0 0 28.5 27"><path d="M6 0 H22.500 V5 H6 Z M0 7.500 H28.500 V20.500 H23.500 V16 H5 V20.500 H0 Z M7.500 18.500 H21 V27 H7.500 Z M10.500 21 V24.200 H18 V21 Z M22.500 10 V13 H25.500 V10 Z" fill="#afb1b3" fill-rule="evenodd"/></svg>
<svg style="position:absolute;left:153.5px;top:1385.7px;" width="21" height="27" viewBox="0 0 21 27"><path d="M6.500 0 H14.500 L15.500 2.500 H21 V6 H0 V2.500 H5.500 Z M1.500 8.500 H19.500 V23.500 C19.500 26 18.500 27 16.500 27 H4.500 C2.500 27 1.500 26 1.500 23.500 Z" fill="#afb1b3"/></svg>
<svg style="position:absolute;left:97.8px;top:1605px;" width="17.5" height="24" viewBox="0 0 17.5 24"><g fill="#afb1b3"><circle cx="3.9" cy="3.9" r="3.9"/><circle cx="3.9" cy="20.1" r="3.9"/><circle cx="13.6" cy="7.1" r="3.6"/></g><path d="M3.9 3.9 V20.1 M13.6 7.1 V9.600000000000001 C13.6 13.919999999999998 3.9 12.0 3.9 16.799999999999997" fill="none" stroke="#afb1b3" stroke-width="3.4"/></svg>
<svg style="position:absolute;left:199px;top:1606px;" width="20" height="24" viewBox="0 0 20 24"><path d="M0.500 1 L16.500 11 L0.500 21 Z" fill="#afb1b3"/><circle cx="19" cy="20" r="4.600" fill="#2d2f30"/><circle cx="19" cy="20" r="3.800" fill="#12d812"/></svg>
<svg style="position:absolute;left:309.5px;top:1607.8px;" width="21" height="17" viewBox="0 0 21 17"><g fill="#afb1b3"><rect x="0" y="0" width="3.600" height="3.600"/><rect x="0" y="6.700" width="3.600" height="3.600"/><rect x="0" y="13.400" width="3.600" height="3.600"/><rect x="6" y="0" width="15" height="3.600"/><rect x="6" y="6.700" width="15" height="3.600"/><rect x="6" y="13.400" width="15" height="3.600"/></g></svg>
<svg style="position:absolute;left:444px;top:1605px;" width="22" height="22" viewBox="0 0 22 22"><circle cx="11" cy="11" r="10.800" fill="#afb1b3"/><rect x="9.200" y="4.500" width="3.600" height="8" fill="#3c3f41"/><rect x="9.200" y="14.500" width="3.600" height="3.500" fill="#3c3f41"/></svg>
<svg style="position:absolute;left:615.9px;top:1605.5px;" width="22.5" height="21" viewBox="0 0 22.5 21"><rect x="0" y="0" width="22.500" height="21" fill="#afb1b3"/><path d="M3.500 4.500 L9 9.500 L3.500 14.500" fill="none" stroke="#3c3f41" stroke-width="2.400"/><rect x="10.500" y="14.500" width="8" height="2.400" fill="#3c3f41"/></svg>
<svg style="position:absolute;left:773.6px;top:1604.5px;" width="27" height="25" viewBox="0 0 27 25"><g fill="#afb1b3"><path d="M0.500 7.500 L8 0.800 L14.500 0 L16 1.600 L12 5 L13.300 6.800 L7 12 L5.800 10.500 L2.500 12.500 Z"/><path d="M9.300 8.700 L13 5.500 L27 20.500 L23 24.500 Z"/></g></svg>
<svg style="position:absolute;left:900.6px;top:1605px;" width="25" height="25" viewBox="0 0 25 25"><g fill="#afb1b3"><path d="M12.500 0 L25 7 L12.500 14.200 L0 7 Z"/><path d="M0 11.800 L2.600 10.300 L12.500 16 L22.400 10.300 L25 11.800 L12.500 19 Z"/><path d="M0 16.800 L2.600 15.300 L12.500 21 L22.400 15.300 L25 16.800 L12.500 24 Z"/></g></svg>
<svg style="position:absolute;left:2719.7px;top:1604px;" width="26.5" height="26.5" viewBox="0 0 26.5 26.5"><path d="M13.200 0 A13.200 13.200 0 1 0 13.200 26.400 H26.400 V13.200 A13.200 13.200 0 0 0 13.200 0 Z" fill="#c75450"/></svg>
<svg style="position:absolute;left:47.6px;top:1645.7px;" width="25" height="24" viewBox="0 0 25 24"><g fill="none" stroke="#afb1b3" stroke-width="2"><rect x="5.500" y="1" width="18.500" height="17.500"/><path d="M1 6 V23 H19"/></g></svg>
<svg style="position:absolute;left:2793.5px;top:1644.7px;" width="20" height="27.2" viewBox="0 0 20 27.2"><g fill="#afb1b3"><circle cx="3.9" cy="3.9" r="3.9"/><circle cx="3.9" cy="23.3" r="3.9"/><circle cx="16.1" cy="7.1" r="3.6"/></g><path d="M3.9 3.9 V23.3 M16.1 7.1 V10.88 C16.1 15.775999999999998 3.9 13.6 3.9 19.04" fill="none" stroke="#afb1b3" stroke-width="3.4"/></svg>
<span style="position:absolute;left:1347.54px;top:50.00px;font-family:'Liberation Sans','DejaVu Sans',sans-serif;font-size:26.58px;line-height:1;white-space:pre;color:#aaabac;font-weight:700;letter-spacing:0.708px;">kings-miniapp-card</span>
<span style="position:absolute;left:59.26px;top:107.00px;font-family:'Liberation Sans','DejaVu Sans',sans-serif;font-size:24.94px;line-height:1;white-space:pre;color:#bbbbbb;font-weight:700;letter-spacing:0.667px;">kings-miniapp-card</span>
<span style="position:absolute;left:334.32px;top:108.00px;font-family:'Liberation Sans','DejaVu Sans',sans-serif;font-size:24.57px;line-height:1;white-space:pre;color:#bbbbbb;-webkit-text-stroke:0.3px;letter-spacing:0.488px;">src</span>
<span style="position:absolute;left:401.37px;top:108.00px;font-family:'Liberation Sans','DejaVu Sans',sans-serif;font-size:24.57px;line-height:1;white-space:pre;color:#bbbbbb;-webkit-text-stroke:0.3px;letter-spacing:0.824px;">main</span>
<span style="position:absolute;left:488.20px;top:108.00px;font-family:'Liberation Sans','DejaVu Sans',sans-serif;font-size:24.57px;line-height:1;white-space:pre;color:#bbbbbb;-webkit-text-stroke:0.3px;letter-spacing:-0.525px;">java</span>
<span style="position:absolute;left:565.06px;top:108.00px;font-family:'Liberation Sans','DejaVu Sans',sans-serif;font-size:24.57px;line-height:1;white-space:pre;color:#bbbbbb;-webkit-text-stroke:0.3px;letter-spacing:1.849px;">io</span>
<span style="position:absolute;left:619.57px;top:108.00px;font-family:'Liberation Sans','DejaVu Sans',sans-serif;font-size:24.57px;line-height:1;white-space:pre;color:#bbbbbb;-webkit-text-stroke:0.3px;letter-spacing:1.104px;">github</span>
<span style="position:absolute;left:723.14px;top:108.00px;font-family:'Liberation Sans','DejaVu Sans',sans-serif;font-size:24.57px;line-height:1;white-space:pre;color:#bbbbbb;-webkit-text-stroke:0.3px;letter-spacing:0.687px;">kings1990</span>
<span style="position:absolute;left:873.56px;top:108.00px;font-family:'Liberation Sans','DejaVu Sans',sans-serif;font-size:24.57px;line-height:1;white-space:pre;color:#bbbbbb;-webkit-text-stroke:0.3px;letter-spacing:1.044px;">card</span>
<span style="position:absolute;left:956.54px;top:108.00px;font-family:'Liberation Sans','DejaVu Sans',sans-serif;font-size:24.57px;line-height:1;white-space:pre;color:#bbbbbb;-webkit-text-stroke:0.3px;letter-spacing:0.999px;">wx</span>
<span style="position:absolute;left:1018.97px;top:108.00px;font-family:'Liberation Sans','DejaVu Sans',sans-serif;font-size:24.57px;line-height:1;white-space:pre;color:#bbbbbb;-webkit-text-stroke:0.3px;letter-spacing:0.670px;">miniapp</span>
<span style="position:absolute;left:1140.96px;top:108.00px;font-family:'Liberation Sans','DejaVu Sans',sans-serif;font-size:24.57px;line-height:1;white-space:pre;color:#bbbbbb;-webkit-text-stroke:0.3px;letter-spacing:1.455px;">api</span>
<span style="position:absolute;left:1239.98px;top:108.00px;font-family:'Liberation Sans','DejaVu Sans',sans-serif;font-size:24.57px;line-height:1;white-space:pre;color:#dc6650;-webkit-text-stroke:0.3px;letter-spacing:0.416px;">BookController</span>
<span style="position:absolute;left:1474.14px;top:108.00px;font-family:'Liberation Sans','DejaVu Sans',sans-serif;font-size:24.57px;line-height:1;white-space:pre;color:#dc6650;-webkit-text-stroke:0.3px;letter-spacing:0.835px;">list</span>
<span style="position:absolute;left:1904.70px;top:110.00px;font-family:'Liberation Sans','DejaVu Sans',sans-serif;font-size:22.42px;line-height:1;white-space:pre;color:#bbbbbb;-webkit-text-stroke:0.3px;letter-spacing:0.192px;">WxMaDemoApplication</span>
<span style="position:absolute;left:2435.27px;top:110.00px;font-family:'Liberation Sans','DejaVu Sans',sans-serif;font-size:22.42px;line-height:1;white-space:pre;color:#bbbbbb;-webkit-text-stroke:0.3px;letter-spacing:0.898px;">Git:</span>
<span style="position:absolute;left:1973.53px;top:164.00px;font-family:'Liberation Sans','DejaVu Sans',sans-serif;font-size:26.50px;line-height:1;white-space:pre;color:#bbbbbb;-webkit-text-stroke:0.3px;letter-spacing:0.577px;">Fast Request:</span>
<span style="position:absolute;left:2220.43px;top:164.00px;font-family:'Liberation Sans','DejaVu Sans',sans-serif;font-size:26.50px;line-height:1;white-space:pre;color:#bbbbbb;-webkit-text-stroke:0.3px;letter-spacing:0.911px;">Request</span>
<span style="position:absolute;left:2412.55px;top:164.00px;font-family:'Liberation Sans','DejaVu Sans',sans-serif;font-size:26.50px;line-height:1;white-space:pre;color:#bbbbbb;-webkit-text-stroke:0.3px;letter-spacing:-0.285px;">APIs</span>
<span style="position:absolute;left:2554.53px;top:164.00px;font-family:'Liberation Sans','DejaVu Sans',sans-serif;font-size:26.50px;line-height:1;white-space:pre;color:#bbbbbb;-webkit-text-stroke:0.3px;letter-spacing:1.008px;">Navigate</span>
<span style="position:absolute;left:2017.84px;top:275.00px;font-family:'Liberation Sans','DejaVu Sans',sans-serif;font-size:27.20px;line-height:1;white-space:pre;color:#bbbbbb;-webkit-text-stroke:0.3px;letter-spacing:0.832px;">card</span>
<span style="position:absolute;left:2495.11px;top:275.00px;font-family:'Liberation Sans','DejaVu Sans',sans-serif;font-size:28.04px;line-height:1;white-space:pre;color:#bbbbbb;-webkit-text-stroke:0.3px;letter-spacing:0.674px;">local</span>
<span style="position:absolute;left:1979.79px;top:350.00px;font-family:'Liberation Sans','DejaVu Sans',sans-serif;font-size:23.97px;line-height:1;white-space:pre;color:#c4c5c6;-webkit-text-stroke:0.3px;letter-spacing:1.189px;">GET</span>
<span style="position:absolute;left:2189.80px;top:347.00px;font-family:'Liberation Sans','DejaVu Sans',sans-serif;font-size:27.61px;line-height:1;white-space:pre;color:#bbbbbb;-webkit-text-stroke:0.3px;letter-spacing:0.605px;">/book/list</span>
<span style="position:absolute;left:2723.56px;top:346.00px;font-family:'Liberation Sans','DejaVu Sans',sans-serif;font-size:28.59px;line-height:1;white-space:pre;color:#5f9078;-webkit-text-stroke:0.3px;letter-spacing:1.125px;">200</span>
<span style="position:absolute;left:1991.72px;top:420.00px;font-family:'Liberation Sans','DejaVu Sans',sans-serif;font-size:24.14px;line-height:1;white-space:pre;color:#bbbbbb;-webkit-text-stroke:0.3px;letter-spacing:0.635px;">Headers</span>
<span style="position:absolute;left:2144.72px;top:420.00px;font-family:'Liberation Sans','DejaVu Sans',sans-serif;font-size:24.14px;line-height:1;white-space:pre;color:#bbbbbb;-webkit-text-stroke:0.3px;letter-spacing:0.156px;">Path Param</span>
<span style="position:absolute;left:2332.94px;top:420.00px;font-family:'Liberation Sans','DejaVu Sans',sans-serif;font-size:24.14px;line-height:1;white-space:pre;color:#bbbbbb;-webkit-text-stroke:0.3px;letter-spacing:0.040px;">URL Params</span>
<span style="position:absolute;left:2528.62px;top:420.00px;font-family:'Liberation Sans','DejaVu Sans',sans-serif;font-size:24.14px;line-height:1;white-space:pre;color:#bbbbbb;-webkit-text-stroke:0.3px;letter-spacing:1.134px;">Body</span>
<span style="position:absolute;left:2647.81px;top:420.00px;font-family:'Liberation Sans','DejaVu Sans',sans-serif;font-size:24.14px;line-height:1;white-space:pre;color:#3cb36e;-webkit-text-stroke:0.3px;letter-spacing:0.395px;">&gt; Response</span>
<span style="position:absolute;left:1992.12px;top:486.00px;font-family:'Liberation Sans','DejaVu Sans',sans-serif;font-size:24.14px;line-height:1;white-space:pre;color:#bbbbbb;-webkit-text-stroke:0.3px;letter-spacing:0.818px;">Json</span>
<span style="position:absolute;left:2104.52px;top:486.00px;font-family:'Liberation Sans','DejaVu Sans',sans-serif;font-size:24.14px;line-height:1;white-space:pre;color:#bbbbbb;-webkit-text-stroke:0.3px;letter-spacing:1.095px;">Pretty</span>
<span style="position:absolute;left:2232.92px;top:486.00px;font-family:'Liberation Sans','DejaVu Sans',sans-serif;font-size:24.14px;line-height:1;white-space:pre;color:#bbbbbb;-webkit-text-stroke:0.3px;letter-spacing:-0.137px;">Raw</span>
<span style="position:absolute;left:2340.27px;top:486.00px;font-family:'Liberation Sans','DejaVu Sans',sans-serif;font-size:24.14px;line-height:1;white-space:pre;color:#bbbbbb;-webkit-text-stroke:0.3px;letter-spacing:1.359px;">Info</span>
<span style="position:absolute;left:2442.42px;top:486.00px;font-family:'Liberation Sans','DejaVu Sans',sans-serif;font-size:24.14px;line-height:1;white-space:pre;color:#bbbbbb;-webkit-text-stroke:0.3px;letter-spacing:0.835px;">Headers</span>
<span style="position:absolute;left:1982.74px;top:555.00px;font-family:'Liberation Sans','DejaVu Sans',sans-serif;font-size:21.41px;line-height:1;white-space:pre;color:#bbbbbb;-webkit-text-stroke:0.3px;letter-spacing:1.299px;">Name</span>
<span style="position:absolute;left:2284.21px;top:555.00px;font-family:'Liberation Sans','DejaVu Sans',sans-serif;font-size:21.41px;line-height:1;white-space:pre;color:#bbbbbb;-webkit-text-stroke:0.3px;letter-spacing:0.369px;">Value</span>
<span style="position:absolute;left:1973.30px;top:596.00px;font-family:'Liberation Sans','DejaVu Sans',sans-serif;font-size:26.85px;line-height:1;white-space:pre;color:#bbbbbb;-webkit-text-stroke:0.3px;letter-spacing:0.672px;">Keep-Alive</span>
<span style="position:absolute;left:2274.59px;top:596.00px;font-family:'Liberation Sans','DejaVu Sans',sans-serif;font-size:26.85px;line-height:1;white-space:pre;color:#bbbbbb;-webkit-text-stroke:0.3px;letter-spacing:1.118px;">timeout=60</span>
<span style="position:absolute;left:1974.90px;top:636.00px;font-family:'Liberation Sans','DejaVu Sans',sans-serif;font-size:26.85px;line-height:1;white-space:pre;color:#bbbbbb;-webkit-text-stroke:0.3px;letter-spacing:0.516px;">Transfer-Encoding</span>
<span style="position:absolute;left:2273.86px;top:636.00px;font-family:'Liberation Sans','DejaVu Sans',sans-serif;font-size:26.85px;line-height:1;white-space:pre;color:#bbbbbb;-webkit-text-stroke:0.3px;letter-spacing:0.860px;">chunked</span>
<span style="position:absolute;left:1974.14px;top:676.00px;font-family:'Liberation Sans','DejaVu Sans',sans-serif;font-size:26.85px;line-height:1;white-space:pre;color:#bbbbbb;-webkit-text-stroke:0.3px;letter-spacing:0.752px;">Connection</span>
<span style="position:absolute;left:2273.19px;top:676.00px;font-family:'Liberation Sans','DejaVu Sans',sans-serif;font-size:26.85px;line-height:1;white-space:pre;color:#bbbbbb;-webkit-text-stroke:0.3px;letter-spacing:0.813px;">keep-alive</span>
<span style="position:absolute;left:1973.30px;top:716.00px;font-family:'Liberation Sans','DejaVu Sans',sans-serif;font-size:26.85px;line-height:1;white-space:pre;color:#bbbbbb;-webkit-text-stroke:0.3px;letter-spacing:0.726px;">Date</span>
<span style="position:absolute;left:2273.78px;top:716.00px;font-family:'Liberation Sans','DejaVu Sans',sans-serif;font-size:26.85px;line-height:1;white-space:pre;color:#bbbbbb;-webkit-text-stroke:0.3px;letter-spacing:0.418px;">Sat, 11 Jun 2022 06:45:47 GMT</span>
<span style="position:absolute;left:1974.14px;top:756.00px;font-family:'Liberation Sans','DejaVu Sans',sans-serif;font-size:26.85px;line-height:1;white-space:pre;color:#bbbbbb;-webkit-text-stroke:0.3px;letter-spacing:0.706px;">Content-Type</span>
<span style="position:absolute;left:2273.86px;top:756.00px;font-family:'Liberation Sans','DejaVu Sans',sans-serif;font-size:26.85px;line-height:1;white-space:pre;color:#bbbbbb;-webkit-text-stroke:0.3px;letter-spacing:0.839px;">application/json</span>
<span style="position:absolute;left:1247.10px;top:658.00px;font-family:'Liberation Sans','DejaVu Sans',sans-serif;font-size:33.08px;line-height:1;white-space:pre;color:#a7a7a7;-webkit-text-stroke:0.3px;letter-spacing:0.545px;text-shadow:1px 1.5px 0 rgba(0,0,0,.6);">Search Everywhere</span>
<span style="position:absolute;left:1559.89px;top:658.00px;font-family:'Liberation Sans','DejaVu Sans',sans-serif;font-size:33.08px;line-height:1;white-space:pre;color:#589df6;-webkit-text-stroke:0.3px;letter-spacing:1.550px;text-shadow:1px 1.5px 0 rgba(0,0,0,.6);">Double</span>
<span style="position:absolute;left:1245.89px;top:730.00px;font-family:'Liberation Sans','DejaVu Sans',sans-serif;font-size:33.08px;line-height:1;white-space:pre;color:#a7a7a7;-webkit-text-stroke:0.3px;letter-spacing:0.889px;text-shadow:1px 1.5px 0 rgba(0,0,0,.6);">Project View</span>
<span style="position:absolute;left:1487.83px;top:730.00px;font-family:'Liberation Sans','DejaVu Sans',sans-serif;font-size:33.70px;line-height:1;white-space:pre;color:#589df6;-webkit-text-stroke:0.3px;text-shadow:1px 1.5px 0 rgba(0,0,0,.6);">1</span>
<span style="position:absolute;left:1246.94px;top:802.00px;font-family:'Liberation Sans','DejaVu Sans',sans-serif;font-size:33.08px;line-height:1;white-space:pre;color:#a7a7a7;-webkit-text-stroke:0.3px;letter-spacing:0.637px;text-shadow:1px 1.5px 0 rgba(0,0,0,.6);">Go to File</span>
<span style="position:absolute;left:1475.70px;top:802.00px;font-family:'Liberation Sans','DejaVu Sans',sans-serif;font-size:33.70px;line-height:1;white-space:pre;color:#589df6;-webkit-text-stroke:0.3px;text-shadow:1px 1.5px 0 rgba(0,0,0,.6);">O</span>
<span style="position:absolute;left:1245.89px;top:874.00px;font-family:'Liberation Sans','DejaVu Sans',sans-serif;font-size:33.08px;line-height:1;white-space:pre;color:#a7a7a7;-webkit-text-stroke:0.3px;letter-spacing:0.642px;text-shadow:1px 1.5px 0 rgba(0,0,0,.6);">Recent Files</span>
<span style="position:absolute;left:1484.44px;top:874.00px;font-family:'Liberation Sans','DejaVu Sans',sans-serif;font-size:33.70px;line-height:1;white-space:pre;color:#589df6;-webkit-text-stroke:0.3px;text-shadow:1px 1.5px 0 rgba(0,0,0,.6);">E</span>
<span style="position:absolute;left:1245.89px;top:946.00px;font-family:'Liberation Sans','DejaVu Sans',sans-serif;font-size:33.08px;line-height:1;white-space:pre;color:#a7a7a7;-webkit-text-stroke:0.3px;letter-spacing:0.822px;text-shadow:1px 1.5px 0 rgba(0,0,0,.6);">Navigation Bar</span>
<span style="position:absolute;left:1245.89px;top:1018.00px;font-family:'Liberation Sans','DejaVu Sans',sans-serif;font-size:33.08px;line-height:1;white-space:pre;color:#a7a7a7;-webkit-text-stroke:0.3px;letter-spacing:1.007px;text-shadow:1px 1.5px 0 rgba(0,0,0,.6);">Drop files here to open them</span>
<span style="position:absolute;left:88.52px;top:1070.00px;font-family:'Liberation Sans','DejaVu Sans',sans-serif;font-size:26.56px;line-height:1;white-space:pre;color:#bbbbbb;-webkit-text-stroke:0.3px;letter-spacing:0.933px;">Run:</span>
<span style="position:absolute;left:224.48px;top:1070.00px;font-family:'Liberation Sans','DejaVu Sans',sans-serif;font-size:26.56px;line-height:1;white-space:pre;color:#bbbbbb;-webkit-text-stroke:0.3px;letter-spacing:0.701px;">WxMaDemoApplication</span>
<span style="position:absolute;left:217.30px;top:1122.20px;font-family:'Liberation Mono','DejaVu Sans Mono',monospace;font-size:26.70px;line-height:1;white-space:pre;color:#bbbbbb;transform-origin:0 20.00px;transform:scaleY(1.09);-webkit-text-stroke:0.35px #bbbbbb;">( ( )\___ | &#x27;_ | &#x27;_| | &#x27;_ \/ _` | \ \ \ \</span>
<span style="position:absolute;left:217.30px;top:1166.20px;font-family:'Liberation Mono','DejaVu Sans Mono',monospace;font-size:26.70px;line-height:1;white-space:pre;color:#bbbbbb;transform-origin:0 20.00px;transform:scaleY(1.09);-webkit-text-stroke:0.35px #bbbbbb;"> \\/  ___)| |_)| | | | | || (_| |  ) ) ) )</span>
<span style="position:absolute;left:217.30px;top:1210.20px;font-family:'Liberation Mono','DejaVu Sans Mono',monospace;font-size:26.70px;line-height:1;white-space:pre;color:#bbbbbb;transform-origin:0 20.00px;transform:scaleY(1.09);-webkit-text-stroke:0.35px #bbbbbb;">  &#x27;  |____| .__|_| |_|_| |_\__, | / / / /</span>
<span style="position:absolute;left:217.30px;top:1254.20px;font-family:'Liberation Mono','DejaVu Sans Mono',monospace;font-size:26.70px;line-height:1;white-space:pre;color:#bbbbbb;transform-origin:0 20.00px;transform:scaleY(1.09);-webkit-text-stroke:0.35px #bbbbbb;"> =========|_|==============|___/=/_/_/_/</span>
<span style="position:absolute;left:217.30px;top:1298.20px;font-family:'Liberation Mono','DejaVu Sans Mono',monospace;font-size:26.70px;line-height:1;white-space:pre;color:#bbbbbb;transform-origin:0 20.00px;transform:scaleY(1.09);-webkit-text-stroke:0.35px #bbbbbb;"> :: Spring Boot ::        (v2.3.0.RELEASE)</span>
<span style="position:absolute;left:217.30px;top:1386.20px;font-family:'Liberation Mono','DejaVu Sans Mono',monospace;font-size:26.70px;line-height:1;white-space:pre;color:#bbbbbb;transform-origin:0 20.00px;transform:scaleY(1.09);-webkit-text-stroke:0.35px #bbbbbb;"> _ _   |_  _ _|_. ___ _ |    _</span>
<span style="position:absolute;left:217.30px;top:1430.20px;font-family:'Liberation Mono','DejaVu Sans Mono',monospace;font-size:26.70px;line-height:1;white-space:pre;color:#bbbbbb;transform-origin:0 20.00px;transform:scaleY(1.09);-webkit-text-stroke:0.35px #bbbbbb;">| | |\/|_)(_| | |_\  |_)||_|_\</span>
<span style="position:absolute;left:217.30px;top:1474.20px;font-family:'Liberation Mono','DejaVu Sans Mono',monospace;font-size:26.70px;line-height:1;white-space:pre;color:#bbbbbb;transform-origin:0 20.00px;transform:scaleY(1.09);-webkit-text-stroke:0.35px #bbbbbb;">     /               |</span>
<span style="position:absolute;left:217.30px;top:1518.20px;font-family:'Liberation Mono','DejaVu Sans Mono',monospace;font-size:26.70px;line-height:1;white-space:pre;color:#bbbbbb;transform-origin:0 20.00px;transform:scaleY(1.09);-webkit-text-stroke:0.35px #bbbbbb;">                        3.4.2</span>
<span style="position:absolute;left:127.51px;top:1606.00px;font-family:'Liberation Sans','DejaVu Sans',sans-serif;font-size:21.72px;line-height:1;white-space:pre;color:#bbbbbb;-webkit-text-stroke:0.3px;letter-spacing:0.447px;">Git</span>
<span style="position:absolute;left:229.02px;top:1606.00px;font-family:'Liberation Sans','DejaVu Sans',sans-serif;font-size:21.72px;line-height:1;white-space:pre;color:#ffffff;-webkit-text-stroke:0.3px;letter-spacing:0.773px;">Run</span>
<span style="position:absolute;left:340.51px;top:1606.00px;font-family:'Liberation Sans','DejaVu Sans',sans-serif;font-size:21.72px;line-height:1;white-space:pre;color:#bbbbbb;-webkit-text-stroke:0.3px;letter-spacing:-0.274px;">TODO</span>
<span style="position:absolute;left:475.02px;top:1606.00px;font-family:'Liberation Sans','DejaVu Sans',sans-serif;font-size:21.72px;line-height:1;white-space:pre;color:#bbbbbb;-webkit-text-stroke:0.3px;letter-spacing:0.647px;">Problems</span>
<span style="position:absolute;left:648.11px;top:1606.00px;font-family:'Liberation Sans','DejaVu Sans',sans-serif;font-size:21.72px;line-height:1;white-space:pre;color:#bbbbbb;-webkit-text-stroke:0.3px;letter-spacing:0.566px;">Terminal</span>
<span style="position:absolute;left:807.12px;top:1606.00px;font-family:'Liberation Sans','DejaVu Sans',sans-serif;font-size:21.72px;line-height:1;white-space:pre;color:#bbbbbb;-webkit-text-stroke:0.3px;letter-spacing:0.945px;">Build</span>
<span style="position:absolute;left:933.22px;top:1606.00px;font-family:'Liberation Sans','DejaVu Sans',sans-serif;font-size:21.72px;line-height:1;white-space:pre;color:#bbbbbb;-webkit-text-stroke:0.3px;letter-spacing:0.673px;">Dependencies</span>
<span style="position:absolute;left:2752.92px;top:1606.00px;font-family:'Liberation Sans','DejaVu Sans',sans-serif;font-size:21.72px;line-height:1;white-space:pre;color:#bbbbbb;-webkit-text-stroke:0.3px;letter-spacing:0.508px;">Event Log</span>
<span style="position:absolute;left:97.80px;top:1648.00px;font-family:'Liberation Sans','DejaVu Sans',sans-serif;font-size:21.95px;line-height:1;white-space:pre;color:#bbbbbb;-webkit-text-stroke:0.3px;letter-spacing:0.414px;">Build completed successfully with 1 warning in 4 sec, 389 ms (a minute ago)</span>
<span style="position:absolute;left:2823.24px;top:1648.00px;font-family:'Liberation Sans','DejaVu Sans',sans-serif;font-size:21.95px;line-height:1;white-space:pre;color:#bbbbbb;-webkit-text-stroke:0.3px;letter-spacing:0.767px;">master</span>
<span style="position:absolute;left:65.00px;top:219.77px;font-family:'Liberation Sans','DejaVu Sans',sans-serif;font-size:21.60px;line-height:1;white-space:pre;color:#bbbbbb;-webkit-text-stroke:0.3px;letter-spacing:0.784px;transform-origin:0 18.00px;transform:rotate(-90deg);">Project</span>
<span style="position:absolute;left:65.00px;top:435.27px;font-family:'Liberation Sans','DejaVu Sans',sans-serif;font-size:21.60px;line-height:1;white-space:pre;color:#bbbbbb;-webkit-text-stroke:0.3px;letter-spacing:0.315px;transform-origin:0 18.00px;transform:rotate(-90deg);">Pull Requests</span>
<span style="position:absolute;left:65.00px;top:1329.38px;font-family:'Liberation Sans','DejaVu Sans',sans-serif;font-size:21.60px;line-height:1;white-space:pre;color:#bbbbbb;-webkit-text-stroke:0.3px;letter-spacing:0.888px;transform-origin:0 18.00px;transform:rotate(-90deg);">Structure</span>
<span style="position:absolute;left:65.00px;top:1517.77px;font-family:'Liberation Sans','DejaVu Sans',sans-serif;font-size:21.60px;line-height:1;white-space:pre;color:#bbbbbb;-webkit-text-stroke:0.3px;letter-spacing:0.690px;transform-origin:0 18.00px;transform:rotate(-90deg);">Bookmarks</span>
<span style="position:absolute;left:2886.50px;top:183.63px;font-family:'Liberation Sans','DejaVu Sans',sans-serif;font-size:21.60px;line-height:1;white-space:pre;color:#bbbbbb;-webkit-text-stroke:0.3px;letter-spacing:0.735px;transform-origin:0 18.00px;transform:rotate(90deg);">Maven</span>
<span style="position:absolute;left:2886.50px;top:328.03px;font-family:'Liberation Sans','DejaVu Sans',sans-serif;font-size:21.60px;line-height:1;white-space:pre;color:#ffffff;-webkit-text-stroke:0.3px;letter-spacing:0.306px;transform-origin:0 18.00px;transform:rotate(90deg);">Fast Request</span>
<span style="position:absolute;left:1218.00px;top:108.00px;font-family:'Liberation Sans','DejaVu Sans',sans-serif;font-size:22.00px;line-height:1;white-space:pre;color:#2b3b47;-webkit-text-stroke:0.3px;transform:translateX(-50%);">c</span>
<span style="position:absolute;left:1452.00px;top:108.00px;font-family:'Liberation Sans','DejaVu Sans',sans-serif;font-size:21.00px;line-height:1;white-space:pre;color:#4a2630;-webkit-text-stroke:0.3px;transform:translateX(-50%);">m</span>
<span style="position:absolute;left:2410.84px;top:220.00px;font-family:'Liberation Sans','DejaVu Sans',sans-serif;font-size:15.50px;line-height:1;white-space:pre;color:#505356;-webkit-text-stroke:0.3px;letter-spacing:0.406px;">curl</span>
<span style="position:absolute;left:2746.44px;top:211.00px;font-family:'Liberation Sans','DejaVu Sans',sans-serif;font-size:34.00px;line-height:1;white-space:pre;color:#afb1b3;font-weight:700;">?</span>
<span style="position:absolute;left:1996.00px;top:275.00px;font-family:'Liberation Sans','DejaVu Sans',sans-serif;font-size:23.00px;line-height:1;white-space:pre;color:#3a2c52;-webkit-text-stroke:0.3px;transform:translateX(-50%);">p</span>
<span style="position:absolute;left:2473.60px;top:280.00px;font-family:'Liberation Sans','DejaVu Sans',sans-serif;font-size:17.00px;line-height:1;white-space:pre;color:#1f4254;font-weight:700;transform:translateX(-50%);">E</span>
<span style="position:absolute;left:2880.99px;top:164.00px;font-family:'Liberation Sans','DejaVu Sans',sans-serif;font-size:30.00px;line-height:1;white-space:pre;color:#afb1b3;font-weight:700;font-style:italic;">m</span>
<span style="position:absolute;left:2726.54px;top:1608.00px;font-family:'Liberation Sans','DejaVu Sans',sans-serif;font-size:19.00px;line-height:1;white-space:pre;color:#ffffff;font-weight:700;">2</span>
<span style="position:absolute;left:1676.50px;top:653.40px;font-family:'Noto Sans CJK SC','DejaVu Sans',sans-serif;font-size:35.00px;line-height:1;white-space:pre;color:#589df6;font-weight:700;transform-origin:0 33.00px;transform:scale(1.16,0.80);text-shadow:1px 1.5px 0 rgba(0,0,0,.6);">⇧</span>
<span style="position:absolute;left:1458.00px;top:732.00px;font-family:'DejaVu Sans','Liberation Sans',sans-serif;font-size:31.00px;line-height:1;white-space:pre;color:#589df6;transform-origin:0 26.00px;transform:scaleX(1.07);text-shadow:1px 1.5px 0 rgba(0,0,0,.6);">⌘</span>
<span style="position:absolute;left:1409.70px;top:797.40px;font-family:'Noto Sans CJK SC','DejaVu Sans',sans-serif;font-size:35.00px;line-height:1;white-space:pre;color:#589df6;font-weight:700;transform-origin:0 33.00px;transform:scale(1.16,0.80);text-shadow:1px 1.5px 0 rgba(0,0,0,.6);">⇧</span>
<span style="position:absolute;left:1444.80px;top:804.00px;font-family:'DejaVu Sans','Liberation Sans',sans-serif;font-size:31.00px;line-height:1;white-space:pre;color:#589df6;transform-origin:0 26.00px;transform:scaleX(1.07);text-shadow:1px 1.5px 0 rgba(0,0,0,.6);">⌘</span>
<span style="position:absolute;left:1454.70px;top:876.00px;font-family:'DejaVu Sans','Liberation Sans',sans-serif;font-size:31.00px;line-height:1;white-space:pre;color:#589df6;transform-origin:0 26.00px;transform:scaleX(1.07);text-shadow:1px 1.5px 0 rgba(0,0,0,.6);">⌘</span>
<span style="position:absolute;left:1490.80px;top:948.00px;font-family:'DejaVu Sans','Liberation Sans',sans-serif;font-size:31.00px;line-height:1;white-space:pre;color:#589df6;transform-origin:0 26.00px;transform:scaleX(1.07);text-shadow:1px 1.5px 0 rgba(0,0,0,.6);">⌘</span>
<span style="position:absolute;left:1513.50px;top:945.20px;font-family:'Noto Sans CJK SC','DejaVu Sans',sans-serif;font-size:33.00px;line-height:1;white-space:pre;color:#589df6;font-weight:700;transform-origin:0 30.00px;transform:scale(1.28,0.80);text-shadow:1px 1.5px 0 rgba(0,0,0,.6);">↑</span>
<svg style="position:absolute;left:0px;top:0px;pointer-events:none;" width="2952" height="1714" viewBox="0 0 2952 1714"><rect x="1947.4" y="522.3" width="924.4" height="362.9" rx="15.5" fill="none" stroke="#00a343" stroke-width="10.4"/></svg>
</div></div>
</body></html>
